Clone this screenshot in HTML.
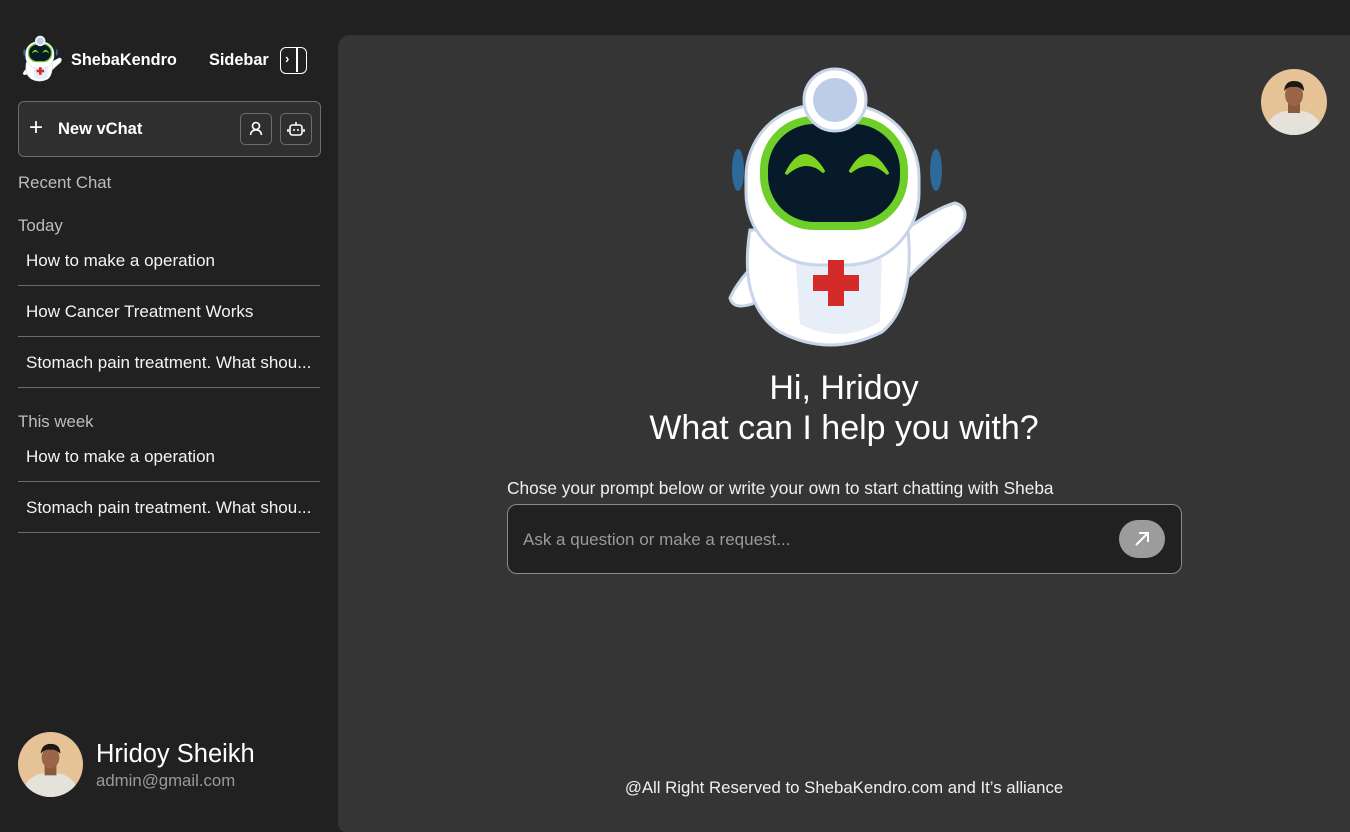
<!DOCTYPE html>
<html><head><meta charset="utf-8"><style>
*{margin:0;padding:0;box-sizing:border-box}
body{width:1350px;height:832px;background:#212121;font-family:"Liberation Sans",sans-serif;color:#fff;position:relative;overflow:hidden}
.a{position:absolute}
.main{left:338px;top:35px;width:1012px;height:797px;background:#353535;border-top-left-radius:12px;border-bottom-left-radius:8px}
.item{position:absolute;left:18px;width:302px;height:51px;border-bottom:1.5px solid #6a6a6a;font-size:17px;padding:16px 0 0 8px;color:#f4f4f4;white-space:nowrap}
.lbl{position:absolute;left:18px;font-size:16.8px;color:#bdbdbd}
</style></head><body>
<svg width="0" height="0" style="position:absolute">
<defs>
<symbol id="robot" viewBox="0 0 280 300">
<ellipse cx="38" cy="110" rx="6" ry="21" fill="#2d6a9a"/>
<ellipse cx="236" cy="110" rx="6" ry="21" fill="#2d6a9a"/>
<path d="M185 185 Q230 150 255 143 Q272 148 260 170 Q230 195 200 225 Z" fill="#fff" stroke="#c8d4e8" stroke-width="3"/>
<path d="M75 185 Q40 215 30 238 Q33 250 52 244 Q75 228 90 215 Z" fill="#fff" stroke="#c8d4e8" stroke-width="3"/>
<path d="M50 170 Q38 245 80 272 Q130 298 182 272 Q215 245 208 170 Z" fill="#fff" stroke="#c8d4e8" stroke-width="3"/>
<path d="M95 190 L182 190 L180 262 Q140 285 100 264 Z" fill="#e8eef7"/>
<rect x="46" y="45" width="173" height="160" rx="72" fill="#fff" stroke="#c8d4e8" stroke-width="3"/>
<rect x="64" y="60" width="140" height="106" rx="50" fill="#061a2a" stroke="#6fcf2a" stroke-width="8"/>
<path d="M86 114 Q104 78 124 112 Q106 96 86 114Z" fill="#7ed321" stroke="#7ed321" stroke-width="3"/>
<path d="M150 112 Q168 78 188 114 Q170 96 150 112Z" fill="#7ed321" stroke="#7ed321" stroke-width="3"/>
<circle cx="135" cy="40" r="31" fill="#fff" stroke="#c8d4e8" stroke-width="3"/>
<circle cx="135" cy="40" r="22" fill="#bccde8"/>
<rect x="128" y="200" width="16" height="46" fill="#d42a2a"/>
<rect x="113" y="215" width="46" height="16" fill="#d42a2a"/>
</symbol>
<symbol id="avatar" viewBox="0 0 66 66">
<clipPath id="cc"><circle cx="33" cy="33" r="33"/></clipPath>
<g clip-path="url(#cc)">
<rect width="66" height="66" fill="#e6c297"/>
<path d="M4 66 Q6 46 24 42 L42 42 Q60 46 62 66Z" fill="#e4e2da"/>
<rect x="27" y="34" width="12" height="10" fill="#8a5a40"/>
<ellipse cx="33" cy="26" rx="9" ry="11" fill="#9a6548"/>
<path d="M23 22 Q24 12 33 12 Q43 12 43 22 Q38 17 33 18 Q27 17 23 22Z" fill="#1e1812"/>
</g>
</symbol>
</defs></svg>

<svg class="a" style="left:18px;top:34px" width="46" height="50"><use href="#robot"/></svg>
<div class="a" style="left:71px;top:51px;font-size:16.3px;font-weight:bold">ShebaKendro</div>
<div class="a" style="left:209px;top:51px;font-size:16.3px;font-weight:bold">Sidebar</div>
<div class="a" style="left:280px;top:47px;width:27px;height:27px;border:1.5px solid #fff;border-radius:6px">
<div class="a" style="left:15px;top:0;width:1.5px;height:24px;background:#fff"></div>
<div class="a" style="left:4px;top:3px;font-size:13px;font-weight:bold">›</div></div>

<div class="a" style="left:18px;top:101px;width:303px;height:56px;background:#2f2f2f;border:1px solid #6d6d6d;border-radius:6px"></div>
<div class="a" style="left:29px;top:114px;font-size:24px;font-weight:300">+</div>
<div class="a" style="left:58px;top:120px;font-size:16.5px;font-weight:bold">New vChat</div>
<div class="a" style="left:240px;top:113px;width:32px;height:32px;border:1px solid #6d6d6d;border-radius:5px">
<svg width="30" height="30" viewBox="0 0 30 30"><circle cx="15" cy="12" r="3.5" fill="none" stroke="#fff" stroke-width="1.6"/><path d="M9.5 21 Q10 16 15 16 Q20 16 20.5 21" fill="none" stroke="#fff" stroke-width="1.6"/></svg></div>
<div class="a" style="left:280px;top:113px;width:32px;height:32px;border:1px solid #6d6d6d;border-radius:5px">
<svg width="30" height="30" viewBox="0 0 30 30"><rect x="9" y="11" width="12" height="10" rx="2.5" fill="none" stroke="#fff" stroke-width="1.6"/><line x1="15" y1="8" x2="15" y2="11" stroke="#fff" stroke-width="1.6"/><line x1="7" y1="15" x2="7" y2="18" stroke="#fff" stroke-width="1.6"/><line x1="23" y1="15" x2="23" y2="18" stroke="#fff" stroke-width="1.6"/><circle cx="13" cy="16" r="1" fill="#fff"/><circle cx="17" cy="16" r="1" fill="#fff"/></svg></div>

<div class="lbl" style="top:173px">Recent Chat</div>
<div class="lbl" style="top:216px">Today</div>
<div class="item" style="top:235px">How to make a operation</div>
<div class="item" style="top:286px">How Cancer Treatment Works</div>
<div class="item" style="top:337px">Stomach pain treatment. What shou...</div>
<div class="lbl" style="top:412px">This week</div>
<div class="item" style="top:431px">How to make a operation</div>
<div class="item" style="top:482px">Stomach pain treatment. What shou...</div>

<svg class="a" style="left:18px;top:732px" width="65" height="65"><use href="#avatar"/></svg>
<div class="a" style="left:96px;top:740px;font-size:25.5px">Hridoy Sheikh</div>
<div class="a" style="left:96px;top:771px;font-size:16.8px;color:#9a9a9a">admin@gmail.com</div>

<div class="a main"></div>
<svg class="a" style="left:1261px;top:69px" width="66" height="66"><use href="#avatar"/></svg>
<svg class="a" style="left:700px;top:60px" width="280" height="300"><use href="#robot"/></svg>
<div class="a" style="left:338px;width:1012px;top:368px;text-align:center;font-size:34px;line-height:40px">Hi, Hridoy<br>What can I help you with?</div>
<div class="a" style="left:507px;top:478px;font-size:17.3px;color:#f0f0f0">Chose your prompt below or write your own to start chatting with Sheba</div>
<div class="a" style="left:507px;top:504px;width:675px;height:70px;background:#212121;border:1px solid #8a8a8a;border-radius:10px"></div>
<div class="a" style="left:523px;top:530px;font-size:17px;color:#9a9a9a">Ask a question or make a request...</div>
<div class="a" style="left:1119px;top:520px;width:46px;height:38px;border-radius:19px;background:#9c9c9c">
<svg width="46" height="38" viewBox="0 0 46 38"><path d="M17 25 L28 14 M20 13 L29 13 L29 22" fill="none" stroke="#fff" stroke-width="2"/></svg></div>
<div class="a" style="left:338px;width:1012px;top:778px;text-align:center;font-size:16.8px;color:#f0f0f0">@All Right Reserved to ShebaKendro.com and It’s alliance</div>
</body></html>
